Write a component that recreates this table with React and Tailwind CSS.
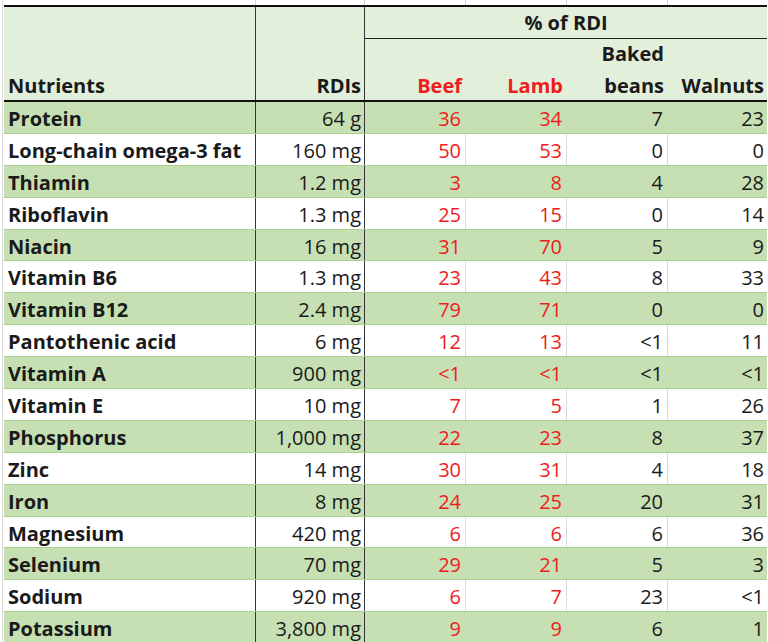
import React from 'react';

const rows = [
  ['Protein', '64 g', '36', '34', '7', '23'],
  ['Long-chain omega-3 fat', '160 mg', '50', '53', '0', '0'],
  ['Thiamin', '1.2 mg', '3', '8', '4', '28'],
  ['Riboflavin', '1.3 mg', '25', '15', '0', '14'],
  ['Niacin', '16 mg', '31', '70', '5', '9'],
  ['Vitamin B6', '1.3 mg', '23', '43', '8', '33'],
  ['Vitamin B12', '2.4 mg', '79', '71', '0', '0'],
  ['Pantothenic acid', '6 mg', '12', '13', '<1', '11'],
  ['Vitamin A', '900 mg', '<1', '<1', '<1', '<1'],
  ['Vitamin E', '10 mg', '7', '5', '1', '26'],
  ['Phosphorus', '1,000 mg', '22', '23', '8', '37'],
  ['Zinc', '14 mg', '30', '31', '4', '18'],
  ['Iron', '8 mg', '24', '25', '20', '31'],
  ['Magnesium', '420 mg', '6', '6', '6', '36'],
  ['Selenium', '70 mg', '29', '21', '5', '3'],
  ['Sodium', '920 mg', '6', '7', '23', '<1'],
  ['Potassium', '3,800 mg', '9', '9', '6', '1'],
];

const cols = 'grid grid-cols-[252px_109px_101px_101px_101px_99px]';

export default function App() {
  return (
    <div className="relative w-[768px] h-[642px] overflow-hidden bg-white text-[#1a1a1a] text-[20px] leading-none font-['Open_Sans',sans-serif]">
      {/* sheet gridline on the left edge */}
      <div className="absolute left-[2px] top-0 h-full border-l border-[#dcdcdc]" />

      {/* gridlines above the table */}
      <div className={`${cols} h-[5px] ml-[4px]`}>
        <div className="border-r border-[#d4d4d4]" />
        <div className="border-r border-[#d4d4d4]" />
        <div className="border-r border-[#d4d4d4]" />
        <div className="border-r border-[#d4d4d4]" />
        <div className="border-r border-[#d4d4d4]" />
        <div />
      </div>

      <div className="relative ml-[4px] w-[763px] border-t-2 border-b-2 border-[#111]">
        {/* Header */}
        <div className={`${cols} h-[93px] bg-[#e2efda] font-bold`}>
          <div className="border-r border-[#333] flex items-end pl-[4px] pb-[4px]">Nutrients</div>
          <div className="border-r border-[#333] flex items-end justify-end pr-[3px] pb-[4px]">RDIs</div>
          <div className="col-span-4 flex flex-col">
            <div className="h-[32px] border-b border-[#222] flex items-center justify-center">% of RDI</div>
            <div className="flex-1 grid grid-cols-[101px_101px_101px_99px]">
              <div className="flex items-end justify-end pr-[4px] pb-[4px] text-[#ee1c1c]">Beef</div>
              <div className="flex items-end justify-end pr-[4px] pb-[4px] text-[#ee1c1c]">Lamb</div>
              <div className="flex flex-col items-end justify-end pr-[4px] pb-[4px] gap-[12px]">
                <span>Baked</span>
                <span>beans</span>
              </div>
              <div className="flex items-end justify-end pr-[3px] pb-[4px]">Walnuts</div>
            </div>
          </div>
        </div>
      </div>

      {/* Body */}
      <div className="relative ml-[4px] w-[763px]">
        {rows.map((r, i) => {
          const green = i % 2 === 0;
          const grid = green ? 'border-transparent' : 'border-[#dadada]';
          return (
            <div
              key={r[0]}
              className={`${cols} h-[31.9px] border-b border-[#a9d08e] ${green ? 'bg-[#c6e0b4]' : 'bg-white'}`}
            >
              <div className="border-r border-[#333] flex items-center pl-[4px] pt-[3px] font-bold">{r[0]}</div>
              <div className="border-r border-[#333] flex items-center justify-end pr-[3px] pt-[3px]">{r[1]}</div>
              <div className={`border-r ${grid} flex items-center justify-end pr-[4px] pt-[3px] text-[#ee1c1c]`}>{r[2]}</div>
              <div className={`border-r ${grid} flex items-center justify-end pr-[4px] pt-[3px] text-[#ee1c1c]`}>{r[3]}</div>
              <div className={`border-r ${grid} flex items-center justify-end pr-[4px] pt-[3px]`}>{r[4]}</div>
              <div className="flex items-center justify-end pr-[3px] pt-[3px]">{r[5]}</div>
            </div>
          );
        })}
      </div>
    </div>
  );
}
